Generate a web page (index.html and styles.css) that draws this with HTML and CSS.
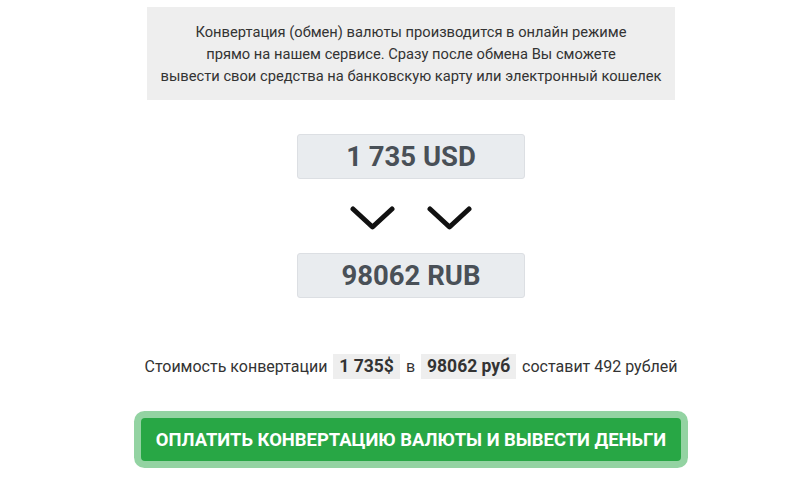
FILE: index.html
```html
<!DOCTYPE html>
<html lang="ru">
<head>
    <meta charset="UTF-8">
    <meta name="viewport" content="width=device-width, initial-scale=1.0">
    <title>Конвертация валюты</title>
    <link rel="stylesheet" href="styles.css">
</head>
<body>
    <div class="container">
        <div class="info-box">
            Конвертация (обмен) валюты производится в онлайн режиме<br>
            прямо на нашем сервисе. Сразу после обмена Вы сможете<br>
            вывести свои средства на банковскую карту или электронный кошелек
        </div>

        <div class="amount">1 735 USD</div>

        <div class="arrows">
            <svg width="45" height="26" viewBox="0 0 45 26">
                <polyline points="3,4 22.5,22 42,4" fill="none" stroke="#111" stroke-width="5" stroke-linecap="round" stroke-linejoin="round"/>
            </svg>
            <svg width="45" height="26" viewBox="0 0 45 26">
                <polyline points="3,4 22.5,22 42,4" fill="none" stroke="#111" stroke-width="5" stroke-linecap="round" stroke-linejoin="round"/>
            </svg>
        </div>

        <div class="amount">98062 RUB</div>

        <p class="summary">
            Стоимость конвертации <span class="hl">1 735$</span> в <span class="hl">98062 руб</span> составит 492 рублей
        </p>

        <a href="#" class="btn-pay">Оплатить конвертацию валюты и вывести деньги</a>
    </div>
</body>
</html>
```

FILE: styles.css
```css
body {
    font-family: Roboto, 'Liberation Sans', Arial, sans-serif;
    margin: 0;
    padding: 7px 0 32px 22px;
    color: #333;
    background-color: #fff;
}
.container {
    display: flex;
    flex-direction: column;
    align-items: center;
}
.info-box {
    width: 528px;
    box-sizing: border-box;
    background: #eeeeee;
    padding: 14px 0 13px;
    font-size: 14.7px;
    line-height: 22px;
    text-align: center;
    white-space: nowrap;
    color: #333;
}
.amount {
    width: 228px;
    height: 45px;
    box-sizing: border-box;
    margin-top: 34px;
    background: #e9ecef;
    border: 1px solid #dcdfe3;
    border-radius: 3px;
    font-size: 27.5px;
    font-weight: 700;
    line-height: 43px;
    text-align: center;
    color: #495057;
}
.arrows {
    display: flex;
    gap: 32px;
    padding: 26px 0 0;
    height: 48px;
}
.arrows + .amount {
    margin-top: 0;
}
.summary {
    margin: 56px 0 0;
    font-size: 16px;
    line-height: 25px;
    color: #333;
    white-space: nowrap;
}
.hl {
    display: inline-block;
    background: #eeeeee;
    padding: 0 6px;
    margin: 0 2px;
    font-size: 17.5px;
    font-weight: 700;
}
.btn-pay {
    display: block;
    width: 540px;
    height: 43px;
    box-sizing: border-box;
    margin-top: 39px;
    background-color: #28a745;
    border-radius: 4px;
    box-shadow: 0 0 0 7px rgba(40, 167, 69, 0.5);
    color: #fff;
    font-size: 18.4px;
    font-weight: 700;
    line-height: 43px;
    text-align: center;
    text-transform: uppercase;
    text-decoration: none;
}
```
